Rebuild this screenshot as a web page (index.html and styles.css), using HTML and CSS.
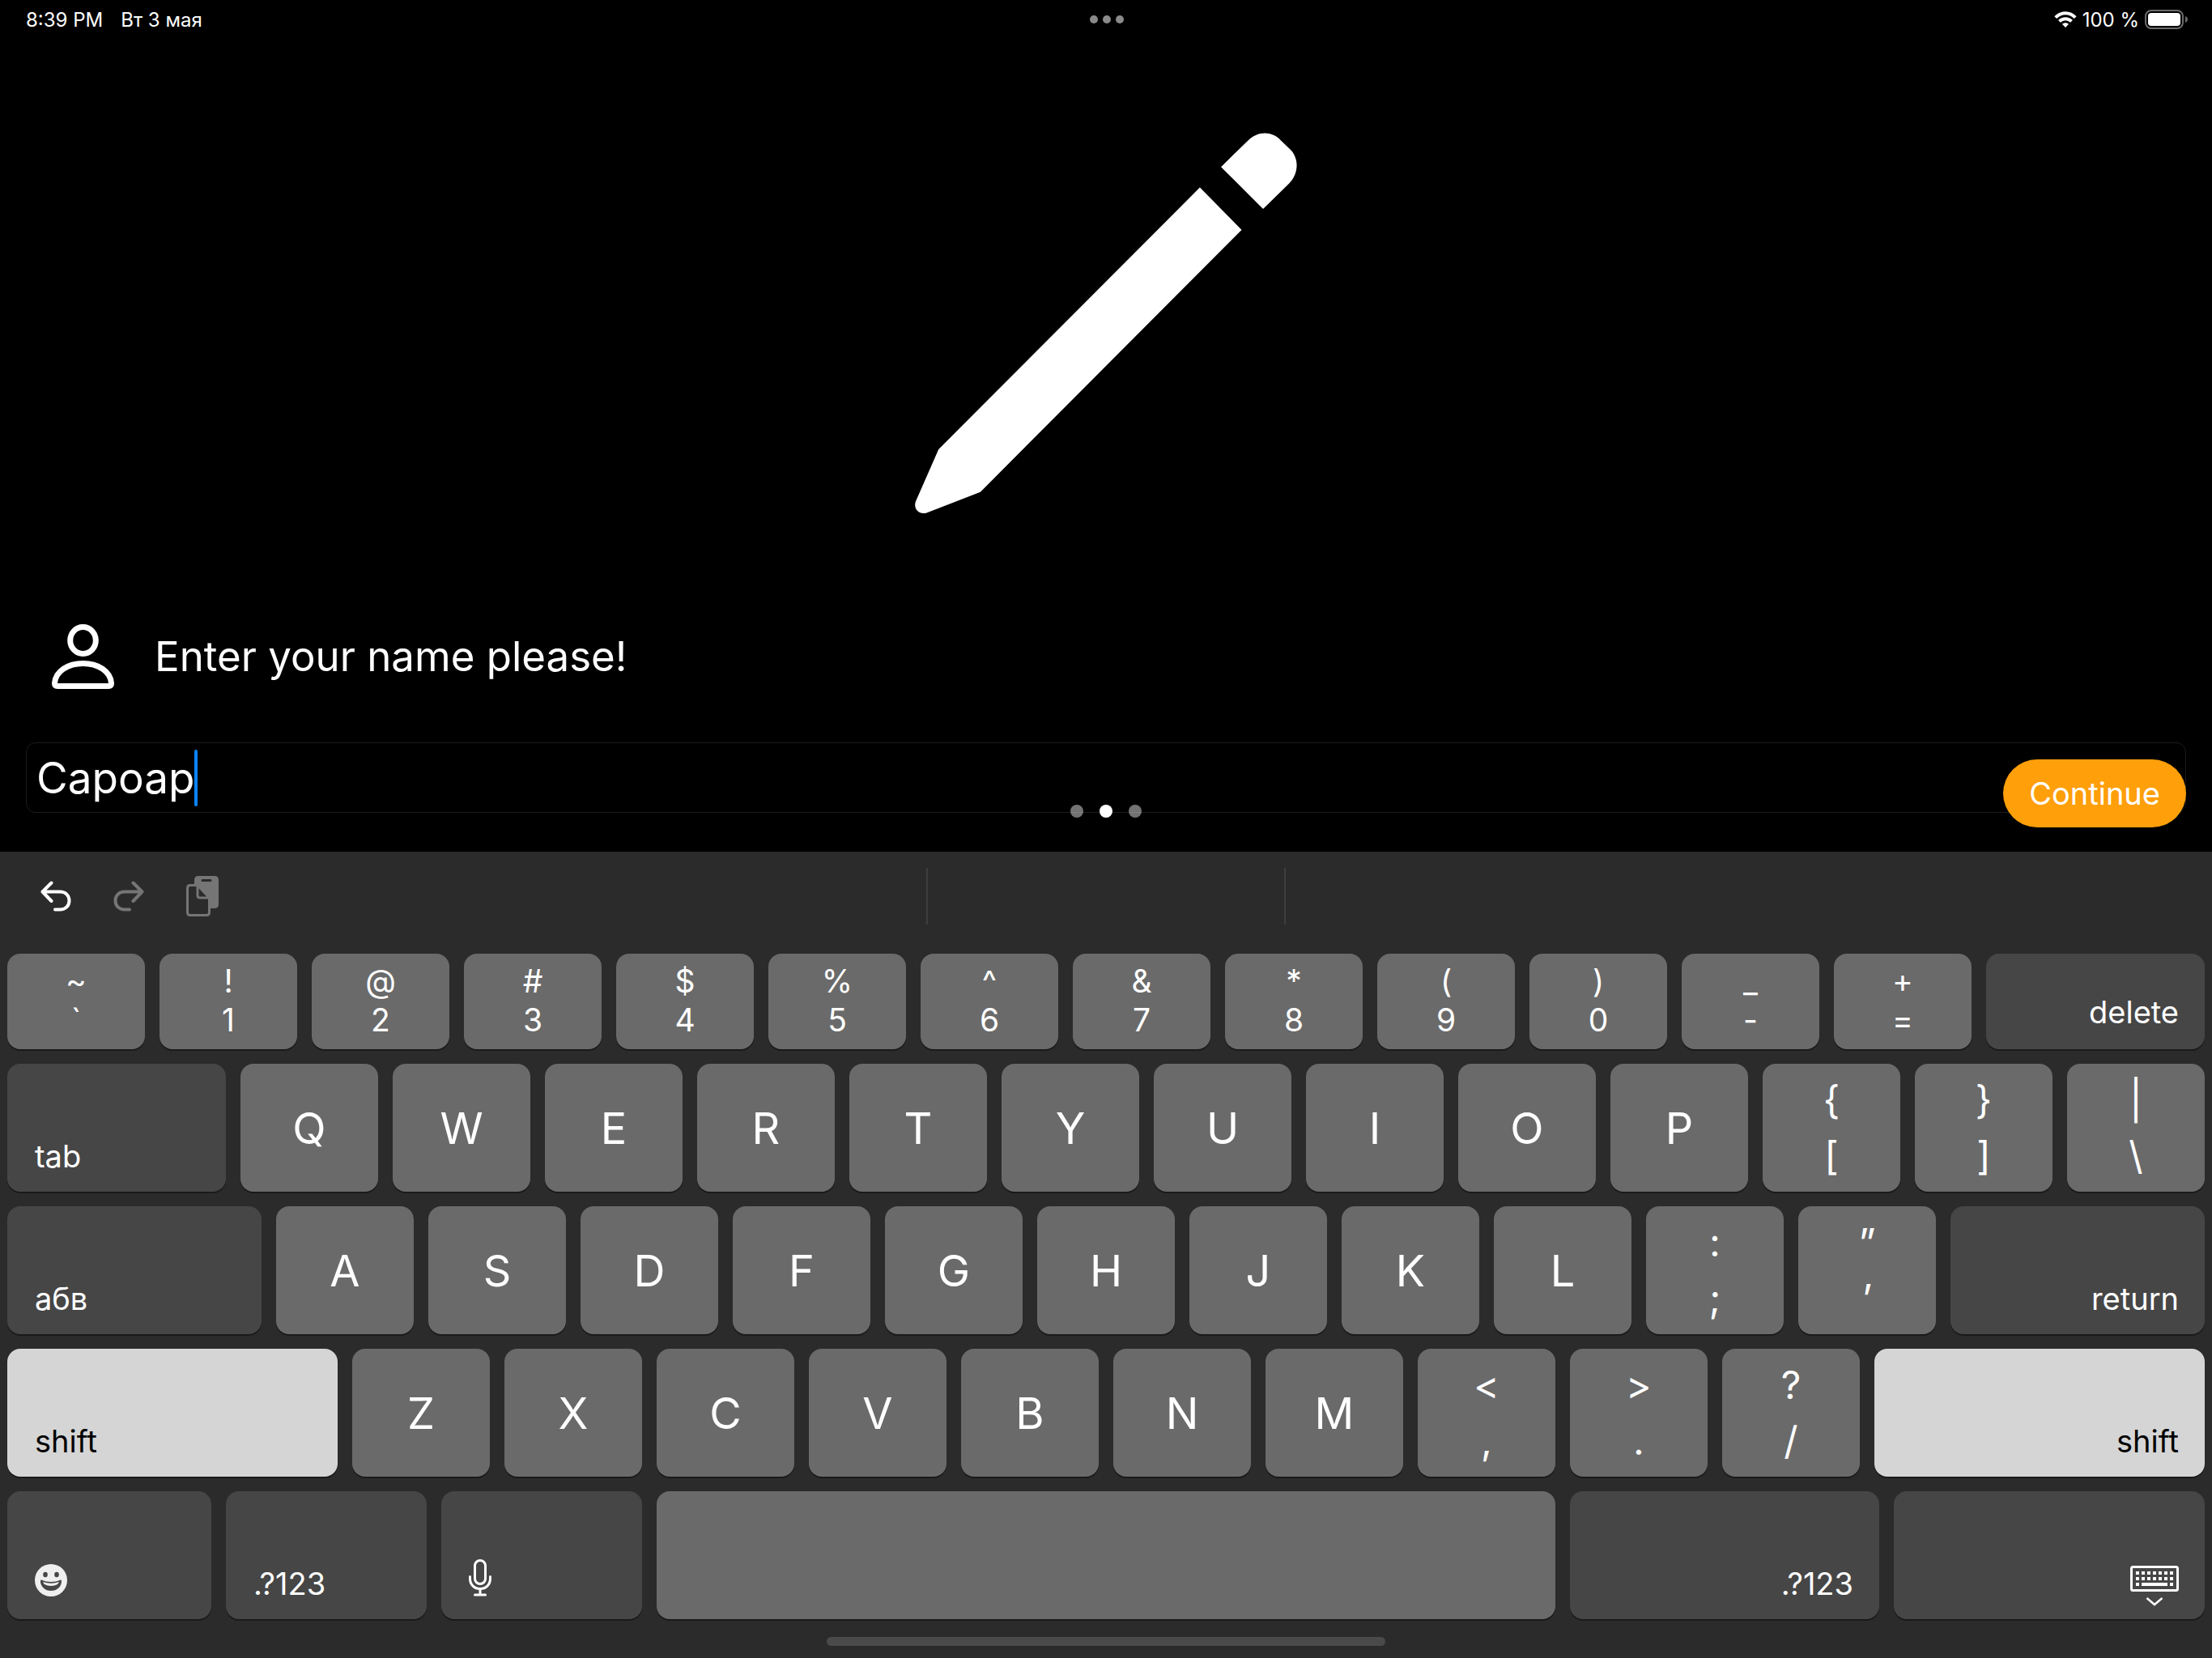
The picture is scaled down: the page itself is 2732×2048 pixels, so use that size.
FILE: index.html
```html
<!DOCTYPE html>
<html lang="en">
<head>
<meta charset="utf-8">
<meta name="viewport" content="width=device-width, initial-scale=1">
<title>Enter your name</title>
<link rel="stylesheet" href="styles.css">
</head>
<body>
<header class="status">
  <div class="status-side">
    <span>8:39 PM</span>
    <span>Вт 3 мая</span>
  </div>
  <div class="multitask"><i></i><i></i><i></i></div>
  <div class="status-side status-right">
    <svg class="wifi" viewBox="0 0 28 20" aria-hidden="true"><g fill="none" stroke="#fff" stroke-width="4"><path d="M1.8 7.6C8.500 .4 19.500 .4 26.200 7.600"/><path d="M6.500 12.400C10.700 8.200 17.300 8.200 21.500 12.400"/></g><path d="M14 20l-4-4.200c2.300-2 5.700-2 8 0z" fill="#fff"/></svg>
    <span>100 %</span>
    <svg class="battery" viewBox="0 0 53 24" aria-hidden="true"><rect x="1" y="1" width="46" height="22" rx="7" fill="none" stroke="#6b6b6b" stroke-width="2"/><rect x="4" y="4" width="40" height="16" rx="4" fill="#fff"/><path d="M50 8c2 .8 3 2.200 3 4s-1 3.200-3 4z" fill="#6b6b6b"/></svg>
  </div>
</header>

<main class="page">
  <svg class="pencil" viewBox="84 98 1372 1368" aria-hidden="true"><path fill="#fff" d="M1183 220L1278 127C1313 91 1364 89 1397 124L1432 158C1465 192 1461 246 1427 280L1334 371ZM1107 294L1257 446L319 1387L126 1462C98 1470 77 1446 87 1421L169 1234Z"/></svg>
  <div class="prompt">
    <svg class="person" viewBox="64 771 77 80" aria-hidden="true"><g fill="none" stroke="#fff" stroke-width="7"><ellipse cx="102.500" cy="791" rx="15.800" ry="16.500"/><path d="M67.500 844C68.500 829 84 819.500 102.500 819.500C121 819.500 136.500 829 137.500 844Q137.500 847.500 134 847.500H71Q67.500 847.500 67.500 844Z"/></g></svg>
    <label for="name">Enter your name please!</label>
  </div>
  <div class="field">
    <input id="name" class="name" type="text" value="Capoap" autocomplete="off" spellcheck="false">
    <span class="caret"></span>
  </div>
  <div class="pager"><i></i><i class="current"></i><i></i></div>
  <button class="continue" type="button">Continue</button>
</main>

<section class="keyboard">
  <div class="toolbar">
    <div class="tools">
      <button type="button" aria-label="Undo"><svg class="arrow" viewBox="0 0 38 38"><path d="M13.500 2.500L2.500 13.500L13.500 25M3 13.500H24C31 13.500 35.500 18 35.500 24.500S31 35.500 24 35.500H18"/></svg></button>
      <button type="button" class="off" aria-label="Redo"><svg class="arrow" viewBox="0 0 38 38"><path d="M24.500 2.500L35.500 13.500L24.500 25M35 13.500H14C7 13.500 2.500 18 2.500 24.500S7 35.500 14 35.500H20"/></svg></button>
      <button type="button" class="off" aria-label="Paste"><svg class="paste" viewBox="0 0 40 50"><path fill="currentColor" fill-rule="evenodd" d="M15 0H35Q40 0 40 5V35Q40 40 35 40H30V29L14 12.500L14 10H10V5Q10 0 15 0ZM20 4Q18.500 4 18.500 5.500T20 7H30Q31.500 7 31.500 5.500T30 4Z"/><path fill="none" stroke="currentColor" stroke-width="3" stroke-linejoin="round" d="M14 11.500H5Q1.500 11.500 1.500 15V45Q1.500 48.500 5 48.500H25Q28.500 48.500 28.500 45V27L14 11.500V24Q14 27 17 27H28.500"/></svg></button>
    </div>
    <div class="suggestion"></div>
    <div></div>
  </div>

  <div class="keys">
    <div class="row row-digits">
      <button type="button" class="key duo"><span>~</span><span>`</span></button>
      <button type="button" class="key duo"><span>!</span><span>1</span></button>
      <button type="button" class="key duo"><span>@</span><span>2</span></button>
      <button type="button" class="key duo"><span>#</span><span>3</span></button>
      <button type="button" class="key duo"><span>$</span><span>4</span></button>
      <button type="button" class="key duo"><span>%</span><span>5</span></button>
      <button type="button" class="key duo"><span>^</span><span>6</span></button>
      <button type="button" class="key duo"><span>&amp;</span><span>7</span></button>
      <button type="button" class="key duo"><span>*</span><span>8</span></button>
      <button type="button" class="key duo"><span>(</span><span>9</span></button>
      <button type="button" class="key duo"><span>)</span><span>0</span></button>
      <button type="button" class="key duo"><span>_</span><span>-</span></button>
      <button type="button" class="key duo"><span>+</span><span>=</span></button>
      <button type="button" class="key fn end">delete</button>
    </div>
    <div class="row row-top">
      <button type="button" class="key fn">tab</button>
      <button type="button" class="key">Q</button>
      <button type="button" class="key">W</button>
      <button type="button" class="key">E</button>
      <button type="button" class="key">R</button>
      <button type="button" class="key">T</button>
      <button type="button" class="key">Y</button>
      <button type="button" class="key">U</button>
      <button type="button" class="key">I</button>
      <button type="button" class="key">O</button>
      <button type="button" class="key">P</button>
      <button type="button" class="key duo"><span>{</span><span>[</span></button>
      <button type="button" class="key duo"><span>}</span><span>]</span></button>
      <button type="button" class="key duo"><span>|</span><span>\</span></button>
    </div>
    <div class="row row-home">
      <button type="button" class="key fn">абв</button>
      <button type="button" class="key">A</button>
      <button type="button" class="key">S</button>
      <button type="button" class="key">D</button>
      <button type="button" class="key">F</button>
      <button type="button" class="key">G</button>
      <button type="button" class="key">H</button>
      <button type="button" class="key">J</button>
      <button type="button" class="key">K</button>
      <button type="button" class="key">L</button>
      <button type="button" class="key duo"><span>:</span><span>;</span></button>
      <button type="button" class="key duo"><span>”</span><span>’</span></button>
      <button type="button" class="key fn end">return</button>
    </div>
    <div class="row row-shift">
      <button type="button" class="key fn lit">shift</button>
      <button type="button" class="key">Z</button>
      <button type="button" class="key">X</button>
      <button type="button" class="key">C</button>
      <button type="button" class="key">V</button>
      <button type="button" class="key">B</button>
      <button type="button" class="key">N</button>
      <button type="button" class="key">M</button>
      <button type="button" class="key duo"><span>&lt;</span><span>,</span></button>
      <button type="button" class="key duo"><span>&gt;</span><span>.</span></button>
      <button type="button" class="key duo"><span>?</span><span>/</span></button>
      <button type="button" class="key fn lit end">shift</button>
    </div>
    <div class="row row-space">
      <button type="button" class="key fn glyph" aria-label="Emoji"><svg class="emoji" viewBox="0 0 40 40"><circle cx="20" cy="20" r="20" fill="#efefef"/><ellipse cx="13" cy="13" rx="2.800" ry="3.200" fill="#464646"/><ellipse cx="27" cy="13" rx="2.800" ry="3.200" fill="#464646"/><path d="M8 19.500Q20 24.500 32 19.500C33.500 18.800 33 23 32.500 24.500C30.500 30 26 33 20 33S9.500 30 7.500 24.500C7 23 6.500 18.800 8 19.500Z" fill="#464646"/><path d="M10 22Q20 25.500 30 22Q29 26.500 20 27Q11 26.500 10 22Z" fill="#efefef"/></svg></button>
      <button type="button" class="key fn">.?123</button>
      <button type="button" class="key fn glyph" aria-label="Dictate"><svg class="mic" viewBox="0 0 28 46"><g fill="none" stroke="#fff" stroke-width="3" stroke-linecap="round"><rect x="7.500" y="1.500" width="13" height="29" rx="6.500"/><path d="M1.500 21.500V24C1.500 31.500 7 36.500 14 36.500S26.500 31.500 26.500 24V21.500M14 36.500V44M7.500 44H20.500"/></g></svg></button>
      <button type="button" class="key" aria-label="Space"></button>
      <button type="button" class="key fn end">.?123</button>
      <button type="button" class="key fn end dismiss" aria-label="Hide keyboard"><svg class="hide" viewBox="0 0 60 50"><rect x="1.500" y="1.500" width="57" height="29" rx="2" fill="none" stroke="#fff" stroke-width="3"/><g stroke="#fff" stroke-width="4" fill="none"><path stroke-dasharray="4 3" d="M7 9H53M7 16H53"/><path d="M7 23H11M14 23H46M49 23H53"/></g><path d="M20.500 40L30 48L39.500 40" fill="none" stroke="#fff" stroke-width="2.500"/></svg></button>
    </div>
  </div>
  <div class="home"></div>
</section>
</body>
</html>
```

FILE: styles.css
```css
* { box-sizing: border-box; }

body {
  margin: 0;
  min-height: 100vh;
  display: flex;
  flex-direction: column;
  background: #000;
  color: #fff;
  font-family: Inter, "Liberation Sans", sans-serif;
}

button, input {
  margin: 0;
  padding: 0;
  border: 0;
  background: none;
  color: inherit;
  font: inherit;
}

svg { display: block; }

/* Status bar */
.status {
  display: grid;
  grid-template-columns: 1fr auto 1fr;
  align-items: center;
  height: 48px;
  padding: 0 30px 0 32px;
  font-size: 24px;
}

.status-side {
  display: flex;
  align-items: center;
  gap: 22px;
}

.status-right {
  justify-content: flex-end;
  gap: 7px;
}

.wifi { width: 28px; height: 20px; }
.battery { width: 53px; height: 24px; }

.multitask, .pager { display: flex; }
.multitask { gap: 6px; }

.multitask i {
  width: 10px;
  height: 10px;
  border-radius: 50%;
  background: #8a8a8a;
}

/* Name page */
.page {
  position: relative;
  flex: 1;
  display: flex;
  flex-direction: column;
  justify-content: flex-end;
  padding: 0 32px 48px;
}

.pencil {
  align-self: center;
  width: 472px;
  height: 471px;
}

.prompt {
  display: flex;
  align-items: center;
  gap: 50px;
  padding: 136px 32px 66px;
  font-size: 51px;
  line-height: 80px;
}

.person { width: 77px; height: 80px; }

.field {
  display: flex;
  align-items: center;
  height: 87px;
  padding: 0 12px;
  border: 1px solid #1c1c1c;
  border-radius: 12px;
}

.name {
  field-sizing: content;
  height: 70px;
  font-size: 53px;
  outline: 0;
}

.caret {
  flex: none;
  width: 4px;
  height: 70px;
  border-radius: 2px;
  background: #0a84ff;
}

.pager {
  position: absolute;
  left: 0;
  right: 0;
  bottom: 42px;
  justify-content: center;
  gap: 20px;
}

.pager i {
  width: 16px;
  height: 16px;
  border-radius: 50%;
  background: rgba(255, 255, 255, 0.45);
}

.pager .current { background: #fff; }

.continue {
  position: absolute;
  right: 32px;
  bottom: 30px;
  height: 84px;
  padding: 0 32px;
  border-radius: 42px;
  background: #ff9f0a;
  font-size: 38px;
}

/* Keyboard */
.keyboard { background: #2b2b2b; }

.toolbar {
  display: grid;
  grid-template-columns: 1fr 444px 1fr;
  align-items: center;
  height: 126px;
  padding-bottom: 16px;
}

.tools {
  display: flex;
  align-items: center;
  gap: 52px;
  padding-left: 50px;
}

.off { color: #757575; }
.arrow { width: 38px; height: 38px; }

.arrow path {
  fill: none;
  stroke: currentColor;
  stroke-width: 4;
  stroke-linecap: round;
  stroke-linejoin: round;
}

.paste { width: 40px; height: 50px; }

.suggestion {
  height: 70px;
  border: solid #3e3e3e;
  border-width: 0 2px;
}

.keys {
  display: flex;
  flex-direction: column;
  gap: 18px;
  padding: 0 9px;
}

.row {
  display: grid;
  gap: 18px;
  height: 158px;
}

.row-digits {
  grid-template-columns: repeat(13, 170fr) 270fr;
  height: 118px;
}

.row-top { grid-template-columns: 270fr repeat(13, 170fr); }
.row-home { grid-template-columns: 314fr repeat(11, 170fr) 314fr; }
.row-shift { grid-template-columns: 408fr repeat(10, 170fr) 408fr; }
.row-space { grid-template-columns: 252fr 248fr 248fr 1110fr 382fr 384fr; }

.key {
  display: flex;
  align-items: center;
  justify-content: center;
  border-radius: 16px;
  background: #6a6a6a;
  box-shadow: 0 2px 0 #1a1a1a;
  font-size: 54px;
}

.duo {
  flex-direction: column;
  font-size: 48px;
  line-height: 69px;
}

.row-digits .duo {
  padding-bottom: 2px;
  font-size: 39px;
  line-height: 48px;
}

.fn {
  align-items: flex-end;
  justify-content: flex-start;
  padding: 0 32px 20px 34px;
  background: #464646;
  font-size: 38px;
  line-height: 48px;
}

.row-digits .fn { padding-bottom: 22px; }

.end { justify-content: flex-end; }
.glyph { padding-bottom: 28px; }
.dismiss { padding-bottom: 16px; }

.lit {
  background: #d5d5d5;
  color: #000;
}

.emoji { width: 40px; height: 40px; }
.mic { width: 28px; height: 46px; }
.hide { width: 60px; height: 50px; }

.home {
  width: 690px;
  height: 11px;
  margin: 22px auto 15px;
  border-radius: 6px;
  background: #4a4a4a;
}
```
